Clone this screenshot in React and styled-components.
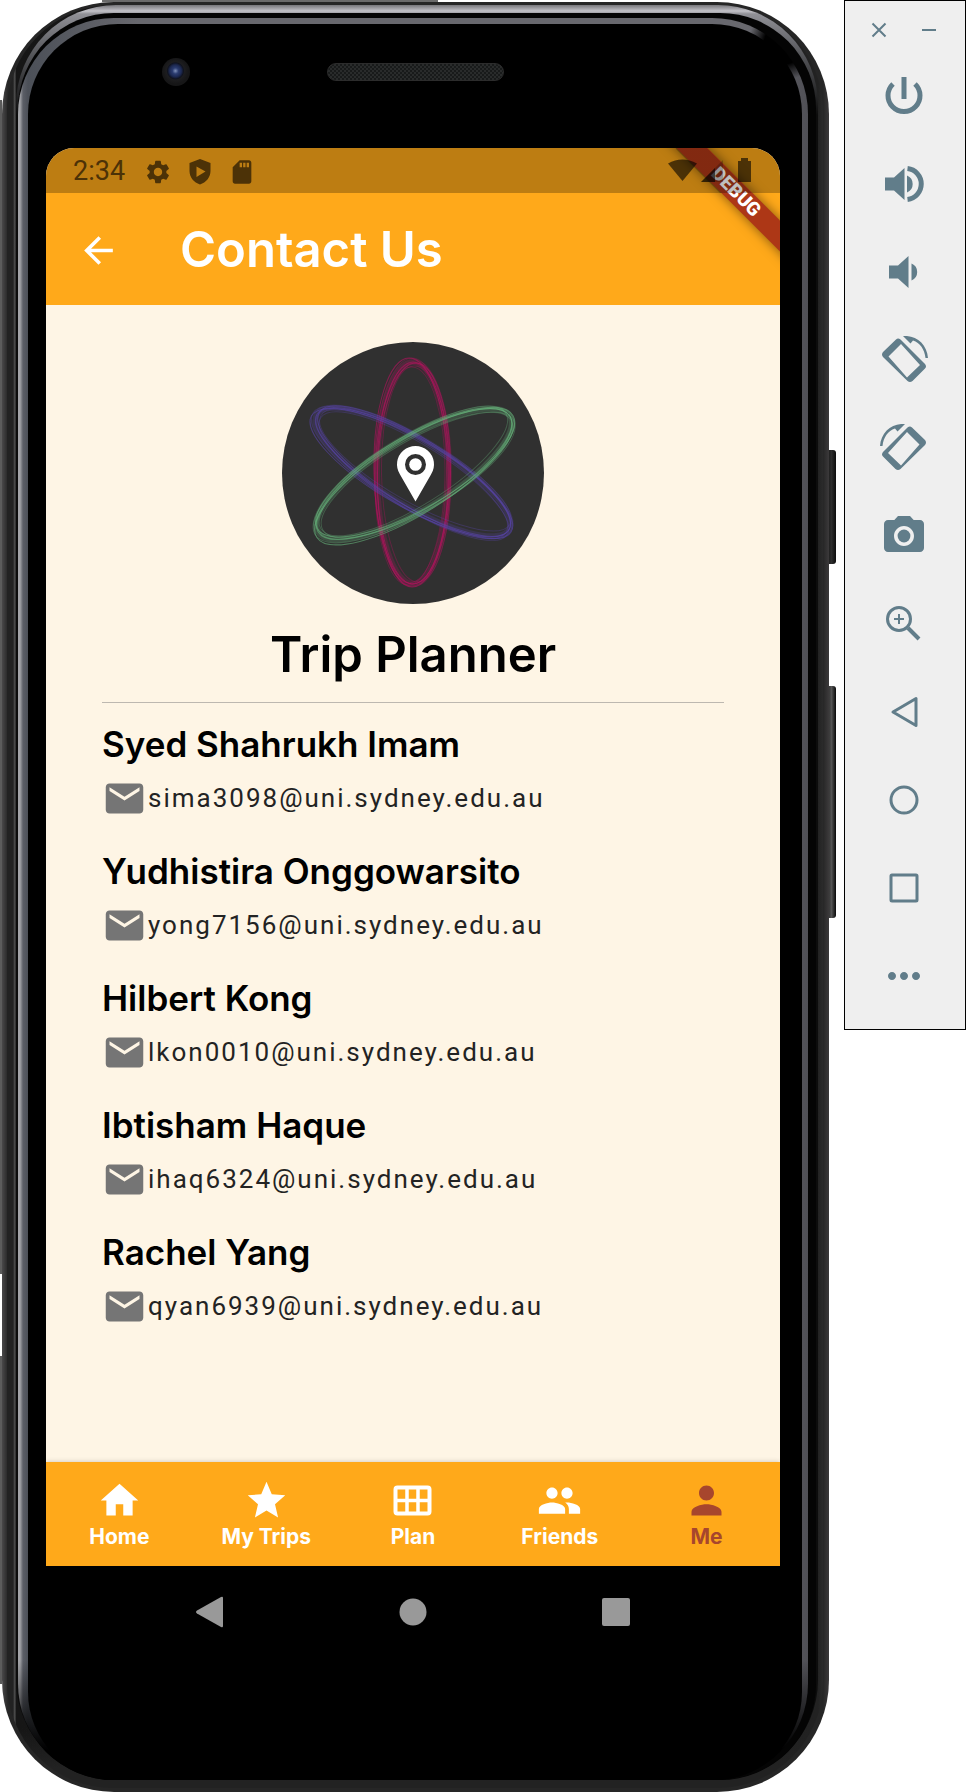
import React from "react";
import styled, { createGlobalStyle } from "styled-components";
import {
  MdSettings, MdSdCard, MdArrowBack, MdEmail, MdHome, MdStar, MdPeople, MdPerson,
  MdCameraAlt, MdMoreHoriz,
} from "react-icons/md";

const GlobalStyle = createGlobalStyle`
  *, *::before, *::after { box-sizing: border-box; }
  body { margin: 0; background: #fff; font-family: Inter, "Liberation Sans", sans-serif; }
  h1, h2, h3, ul { margin: 0; padding: 0; }
  ul { list-style: none; }
  button { border: 0; padding: 0; background: none; color: inherit; font: inherit; cursor: pointer; }
  svg { display: block; }
`;

const Page = styled.div`
  display: flex;
  align-items: flex-start;
  gap: 8px;
`;

/* Phone hardware */
const PhoneWrap = styled.div`
  position: relative;
  flex: 1;
  min-width: 0;
  padding: 2px 7px 1px 2px;
  background:
    linear-gradient(#5c5c5c, #5c5c5c) 0 100px / 2px 1174px no-repeat,
    linear-gradient(#5c5c5c, #5c5c5c) 0 1356px / 2px 328px no-repeat,
    linear-gradient(#6b6b6b, #6b6b6b) 102px 0 / 336px 2px no-repeat;
`;

const SideButton = styled.span`
  position: absolute;
  right: 0;
  top: ${(p) => p.$top}px;
  width: 10px;
  height: ${(p) => p.$height}px;
  border-radius: 3px;
  background: linear-gradient(90deg, #111, ${(p) => p.$shine} 55%, #111 95%);
`;

const Shell = styled.div`
  position: relative;
  padding: 3px 6px 4px 5px;
  border-radius: 112px;
  background: linear-gradient(90deg, #4a494a 0, #262626 6px, #262626 calc(100% - 6px), #3c3a3b 100%);
`;

const Groove = styled.div`
  padding: 0 5px 8px 9px;
  border-radius: 106px;
  background:
    linear-gradient(180deg, transparent calc(100% - 60px), #222 calc(100% - 20px)),
    linear-gradient(90deg, #222 0, #222 6px, #555 8px, #161616 9px, #222 calc(100% - 5px), #2b2b2b 100%);
`;

const Rim = styled.div`
  padding: 8px 2px 0 2px;
  border-radius: 100px;
  background: linear-gradient(180deg, #77777b 0, #c3c2c8 6px, #909096 9px, #55565a 50px, #0c0c0c 110px, #0c0c0c 100%);
`;

const Gap = styled.div`
  padding: 5px 8px 0 0;
  border-radius: 96px;
  background: #040404;
`;

const Glow = styled.div`
  padding: 6px 6px 0 10px;
  border-radius: 96px;
  background:
    radial-gradient(circle at calc(100% - 24px) 26px, #000 20px, transparent 36px),
    linear-gradient(180deg, transparent calc(100% - 120px), #000 calc(100% - 30px)),
    linear-gradient(90deg, #a3a4a8 0, #a3a4a8 2px, #5b5e66 5px, #4c5058 10px, #68686e 120px, #68686e calc(100% - 60px), #505056 100%);
`;

const Face = styled.div`
  position: relative;
  padding: 124px 22px 0 18px;
  border-radius: 90px 90px 88px 88px;
  background: #000;
`;

const Camera = styled.span`
  position: absolute;
  left: 134px;
  top: 34px;
  width: 28px;
  height: 28px;
  border-radius: 50%;
  background: radial-gradient(circle at 48% 46%, #7f90b8 0, #2b3c70 3px, #1c2850 6px, #10131f 8px, #1d1d1f 9px, #161617 13px);
`;

const Speaker = styled.span`
  position: absolute;
  left: 299px;
  top: 39px;
  width: 177px;
  height: 18px;
  border-radius: 9px;
  border: 1px solid #2c2c2c;
  background: repeating-conic-gradient(#292b2b 0 25%, #181a1a 0 50%) 0 0 / 4px 4px;
`;

/* Display */
const Screen = styled.div`
  position: relative;
  display: flex;
  flex-direction: column;
  overflow: hidden;
  border-radius: 28px 28px 0 0;
  background: #fef5e5;
`;

const StatusBar = styled.div`
  display: flex;
  align-items: center;
  gap: 19px;
  height: 45px;
  padding: 2px 24px 0 27px;
  background: #bd7d12;
  color: #4c3207;
  font: 400 27px/43px Roboto, sans-serif;
`;

const StatusIcons = styled.div`
  display: flex;
  align-items: center;
  gap: 14px;
`;

const AppBar = styled.header`
  display: flex;
  align-items: center;
  gap: 60px;
  height: 112px;
  padding: 2px 31px 0;
  background: #ffa91a;
  color: #fff;
`;

const BackButton = styled.button`
  width: 43px;
  height: 43px;
`;

const Title = styled.h1`
  font-size: 49px;
  line-height: 60px;
  font-weight: 600;
`;

const DebugClip = styled.div`
  position: absolute;
  top: 0;
  right: 0;
  width: 150px;
  height: 150px;
  overflow: hidden;
  pointer-events: none;
`;

const DebugBanner = styled.div`
  position: absolute;
  top: 33px;
  right: -56px;
  width: 200px;
  height: 22px;
  transform: rotate(45deg);
  background: #ad3716;
  box-shadow: 0 0 12px rgba(0, 0, 0, 0.5);
  color: #fff;
  text-align: center;
  font: 900 19px/22px Roboto, sans-serif;
`;

const StatusShade = styled.div`
  position: absolute;
  top: 0;
  left: 0;
  right: 0;
  height: 45px;
  background: linear-gradient(90deg, rgba(0, 0, 0, 0) 30%, rgba(0, 0, 0, 0.25) 31%);
  clip-path: polygon(45px 0, 77px 0, 122px 45px, 90px 45px);
`;

const StatusGlyphs = styled.div`
  position: absolute;
  top: 9px;
  right: 22px;
  color: rgba(0, 0, 0, 0.6);
`;

const Content = styled.main`
  display: flex;
  flex-direction: column;
  padding: 37px 56px 134px;
`;

const Logo = styled.svg`
  align-self: center;
  width: 262px;
  height: 262px;
`;

const AppName = styled.h2`
  margin-top: 20px;
  padding-bottom: 16px;
  border-bottom: 1px solid #bdb8b0;
  text-align: center;
  font-size: 49px;
  line-height: 62px;
  font-weight: 600;
  color: #000;
`;

const ContactList = styled.ul`
  display: flex;
  flex-direction: column;
  gap: 30px;
  padding-top: 20px;
`;

const ContactItem = styled.li`
  display: flex;
  flex-direction: column;
  gap: 12px;
`;

const ContactName = styled.h3`
  font-size: 35px;
  line-height: 42px;
  font-weight: 600;
  color: #000;
`;

const ContactLink = styled.a`
  display: flex;
  align-items: center;
  gap: 1px;
  height: 43px;
  color: #232323;
  font: 400 26px/43px Roboto, sans-serif;
  letter-spacing: 2px;
  text-decoration: none;
  svg { flex: none; color: #757575; }
`;

const BottomNav = styled.nav`
  display: grid;
  grid-template-columns: repeat(5, 1fr);
  height: 104px;
  background: #ffa91a;
  box-shadow: 0 0 5px rgba(0, 0, 0, 0.2);
`;

const NavButton = styled.button`
  display: flex;
  flex-direction: column;
  align-items: center;
  justify-content: center;
  color: ${(p) => (p.$active ? "#a7462d" : "#fff")};
  font-size: 21px;
  line-height: 28px;
  font-weight: 700;
`;

const SystemNav = styled.div`
  display: flex;
  justify-content: space-around;
  padding: 30px 62px 152px;
  color: #999;
`;

/* Emulator toolbar */
const Toolbar = styled.aside`
  flex: none;
  display: flex;
  flex-direction: column;
  align-items: center;
  width: 122px;
  padding: 15px 2px 29px 0;
  border: 1px solid #000;
  background: #efefef;
  color: #617d8a;
`;

const WindowControls = styled.div`
  display: flex;
  gap: 22px;
  margin-bottom: 28px;
`;

const Tools = styled.div`
  display: flex;
  flex-direction: column;
  gap: 40px;
`;

const ToolButton = styled.button`
  display: grid;
  place-items: center;
  width: 48px;
  height: 48px;
`;

const Stroke = ({ size = 48, width = 3, children }) => (
  <svg width={size} height={size} viewBox={`0 0 ${size} ${size}`} fill="none" stroke="currentColor" strokeWidth={width}>
    {children}
  </svg>
);

const Solid = ({ size = 48, children }) => (
  <svg width={size} height={size} viewBox="0 0 48 48" fill="currentColor">{children}</svg>
);

const RotateGlyph = ({ flip }) => (
  <svg width="48" height="48" viewBox="0 0 48 48" fill="currentColor">
    <g transform={flip ? "translate(48 0) scale(-1 1)" : undefined}>
      <path fillRule="evenodd" d="M16 3.500Q18 1.500 20.500 3.500L45 28Q47 30.500 45 32.500L32.500 45Q30 47 27.500 45L3 21Q1 18.500 3 16ZM21 8L8.500 20.500L27 41.500L40 29Z" />
      <path d="M23 0C36 -1 47 8 48 22L45.500 22C44.500 13 40 7 33 4.500L30.500 7.500Z" />
    </g>
  </svg>
);

const tools = [
  ["Power", (
    <Stroke width={5}>
      <path d="M13 12A16 16 0 1 0 35 12M24 5V27" />
    </Stroke>
  )],
  ["Volume up", (
    <Solid>
      <path d="M5 17.500H14L24.500 8V40L14 30.500H5ZM27 15.500A9.200 9.200 0 0 1 27 32.500Z" />
      <path d="M27.500 8.600A15.500 15.500 0 0 1 27.500 39.400" fill="none" stroke="currentColor" strokeWidth="5" />
    </Solid>
  )],
  ["Volume down", <Solid><path d="M9 17.500H18L28.500 8V40L18 30.500H9ZM31.500 15.500A9.200 9.200 0 0 1 31.500 32.500Z" /></Solid>],
  ["Rotate left", <RotateGlyph />],
  ["Rotate right", <RotateGlyph flip />],
  ["Take screenshot", <MdCameraAlt size={48} />],
  ["Zoom", (
    <Stroke>
      <circle cx="19" cy="19" r="11.500" />
      <path d="M28 28L39 39" strokeWidth="4" />
      <path d="M19 14V24M14 19H24" strokeWidth="2" />
    </Stroke>
  )],
  ["Back", <Stroke><path d="M13 24L36 10.500V37.500Z" strokeLinejoin="round" /></Stroke>],
  ["Home", <Stroke><circle cx="24" cy="24" r="13" /></Stroke>],
  ["Overview", <Stroke><rect x="11" y="11" width="26" height="26" rx="1" /></Stroke>],
  ["More", <MdMoreHoriz size={48} />],
];

const contacts = [
  ["Syed Shahrukh Imam", "sima3098@uni.sydney.edu.au"],
  ["Yudhistira Onggowarsito", "yong7156@uni.sydney.edu.au"],
  ["Hilbert Kong", "lkon0010@uni.sydney.edu.au"],
  ["Ibtisham Haque", "ihaq6324@uni.sydney.edu.au"],
  ["Rachel Yang", "qyan6939@uni.sydney.edu.au"],
];

const GridGlyph = () => (
  <svg width="45" height="45" viewBox="0 0 45 45" fill="none" stroke="currentColor">
    <rect x="5.500" y="9.500" width="34" height="26" rx="2" strokeWidth="4" />
    <path d="M6 22.500H39M17 10V35M28 10V35" strokeWidth="3.500" />
  </svg>
);

const tabs = [
  ["Home", <MdHome size={45} />],
  ["My Trips", <MdStar size={45} />],
  ["Plan", <GridGlyph />],
  ["Friends", <MdPeople size={45} />],
  ["Me", <MdPerson size={45} />],
];

/* Each orbit is a bundle of faint ellipses, shifted slightly from one another. */
const strands = [
  [0, 0, 0, 0], [2, -1, 1, 1], [-2, 2, -1, 2], [3, 3, 1, -2], [1, -3, -1, -3], [-1, 1, 0, 3], [0, 2, 1, -1],
];

const Orbit = ({ cx, cy, rx, ry, angle, color }) => (
  <g fill="none" stroke={color}>
    <ellipse cx={cx} cy={cy} rx={rx} ry={ry} transform={`rotate(${angle} ${cx} ${cy})`} strokeWidth="6" strokeOpacity="0.25" />
    {strands.map(([dx, dy, tilt, grow], i) => (
      <ellipse
        key={i}
        cx={cx + dx}
        cy={cy + dy}
        rx={rx + grow}
        ry={ry + grow / 2}
        transform={`rotate(${angle + tilt} ${cx} ${cy})`}
        strokeWidth="1"
        strokeOpacity={i < 3 ? 0.6 : 0.35}
      />
    ))}
  </g>
);

const TripLogo = () => (
  <Logo viewBox="0 0 262 262" role="img" aria-label="Trip Planner logo">
    <circle cx="131" cy="131" r="131" fill="#303030" />
    <Orbit cx={131} cy={131} rx={111} ry={36} angle={90} color="#b5125f" />
    <Orbit cx={131} cy={130} rx={112} ry={33} angle={31} color="#5844a8" />
    <Orbit cx={132} cy={132} rx={112} ry={36} angle={-31} color="#66b37a" />
    <path
      fill="#fff"
      fillRule="evenodd"
      d="M133.500 159.500L118 132.500A18.500 18.500 0 1 1 149 132.500ZM133.500 112A10.500 10.500 0 1 0 133.500 133A10.500 10.500 0 1 0 133.500 112Z"
    />
    <circle cx="133.500" cy="122.500" r="6.300" fill="#fff" />
  </Logo>
);

const ShieldGlyph = () => (
  <svg width="28" height="28" viewBox="0 0 28 28" fill="currentColor">
    <path fillRule="evenodd" d="M14 1L24.500 5V13C24.500 19.500 20 24.500 14 26.500C8 24.500 3.500 19.500 3.500 13V5ZM10.500 8.500V19L19.500 13.500Z" />
  </svg>
);

const Phone = () => (
  <PhoneWrap>
    <SideButton $top={450} $height={114} $shine="#2e2e2e" />
    <SideButton $top={686} $height={232} $shine="#555" />
    <Shell><Groove><Rim><Gap><Glow><Face>
      <Camera />
      <Speaker />
      <Screen>
        <StatusBar>
          <span>2:34</span>
          <StatusIcons>
            <MdSettings size={28} />
            <ShieldGlyph />
            <MdSdCard size={28} />
          </StatusIcons>
        </StatusBar>
        <AppBar>
          <BackButton aria-label="Back"><MdArrowBack size={43} /></BackButton>
          <Title>Contact Us</Title>
        </AppBar>
        <DebugClip>
          <DebugBanner>DEBUG</DebugBanner>
          <StatusShade />
          <StatusGlyphs>
            <svg width="90" height="28" viewBox="0 0 90 28" fill="currentColor">
              <path d="M0 6.500Q14 -1.500 29 6.500L14.500 24Z" />
              <path d="M33 25L55 3V25Z" fillOpacity="0.350" />
              <path d="M33 25L47 11V25Z" />
              <path d="M73 1H80V4H83V25H70V4H73Z" />
            </svg>
          </StatusGlyphs>
        </DebugClip>
        <Content>
          <TripLogo />
          <AppName>Trip Planner</AppName>
          <ContactList>
            {contacts.map(([name, email]) => (
              <ContactItem key={email}>
                <ContactName>{name}</ContactName>
                <ContactLink href={`mailto:${email}`}><MdEmail size={45} />{email}</ContactLink>
              </ContactItem>
            ))}
          </ContactList>
        </Content>
        <BottomNav>
          {tabs.map(([label, icon]) => (
            <NavButton key={label} $active={label === "Me"}>{icon}<span>{label}</span></NavButton>
          ))}
        </BottomNav>
      </Screen>
      <SystemNav>
        <svg width="30" height="32" viewBox="0 0 30 32" fill="currentColor"><path d="M2 14.500L26 1Q28 0 28 2V30Q28 32 26 31L2 17.500Q0 16 2 14.500Z" /></svg>
        <svg width="30" height="32" viewBox="0 0 30 32" fill="currentColor"><circle cx="15" cy="16" r="13.500" /></svg>
        <svg width="30" height="32" viewBox="0 0 30 32" fill="currentColor"><rect x="1" y="2" width="28" height="28" rx="2" /></svg>
      </SystemNav>
    </Face></Glow></Gap></Rim></Groove></Shell>
  </PhoneWrap>
);

export default function App() {
  return (
    <>
      <GlobalStyle />
      <Page>
        <Phone />
        <Toolbar>
          <WindowControls>
            <button aria-label="Close"><Stroke size={28} width={2}><path d="M7.500 7.500L20.500 20.500M20.500 7.500L7.500 20.500" /></Stroke></button>
            <button aria-label="Minimise"><Stroke size={28} width={2}><path d="M7 14H21" /></Stroke></button>
          </WindowControls>
          <Tools>
            {tools.map(([label, icon]) => <ToolButton key={label} aria-label={label}>{icon}</ToolButton>)}
          </Tools>
        </Toolbar>
      </Page>
    </>
  );
}
